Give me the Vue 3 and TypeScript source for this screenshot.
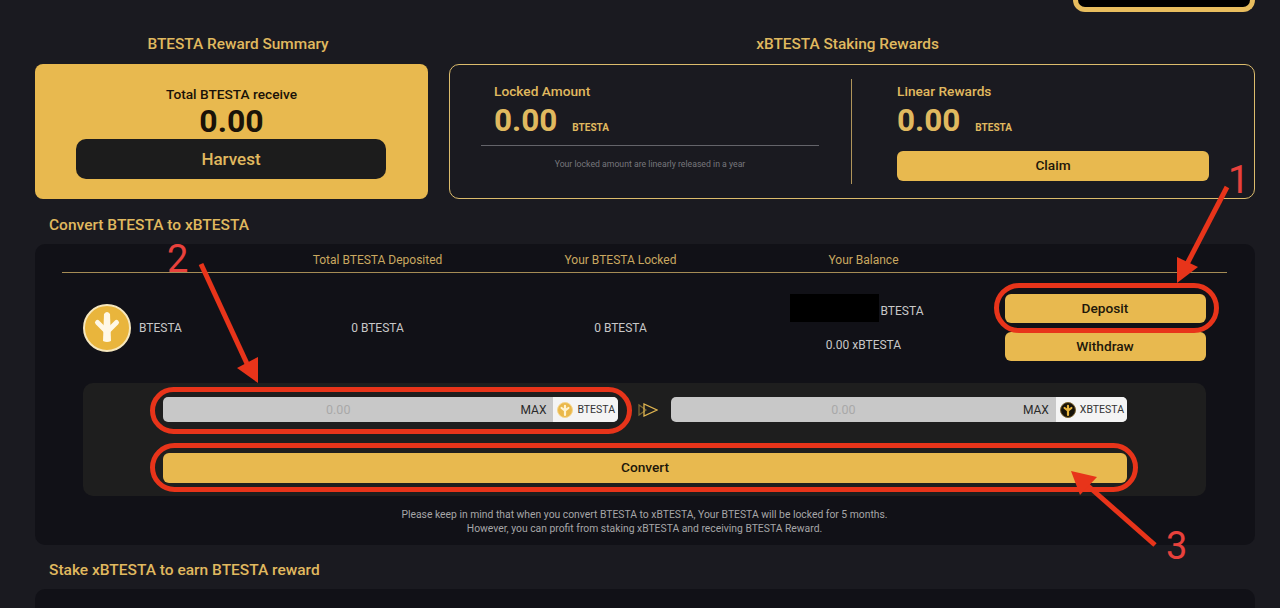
<script setup lang="ts">
interface Field {
  token: string
  logo: 'gold' | 'dark'
}

const fields: Field[] = [
  { token: 'BTESTA', logo: 'gold' },
  { token: 'XBTESTA', logo: 'dark' },
]

interface Pointer {
  label: string
  x: number
  y: number
  line: string
  head: string
}

const pointers: Pointer[] = [
  { label: '1', x: 1228, y: 193, line: 'M1227 187L1186 266', head: '1177,283 1177,257 1198,267' },
  { label: '2', x: 167, y: 272, line: 'M201 264L249 368', head: '258,383 237,368 258,357' },
  { label: '3', x: 1166, y: 559, line: 'M1155 545L1087 485', head: '1071,471 1097,477 1080,495' },
]
</script>

<template>
  <div class="page">
    <div class="top-bar">
      <div class="wallet"></div>
    </div>

    <div class="summary">
      <section>
        <h2 class="summary-title reward-title">BTESTA Reward Summary</h2>
        <div class="reward-card">
          <div class="reward-label">Total BTESTA receive</div>
          <div class="reward-value">0.00</div>
          <button class="harvest">Harvest</button>
        </div>
      </section>
      <section>
        <h2 class="summary-title staking-title">xBTESTA Staking Rewards</h2>
        <div class="staking-card">
          <div class="staking-col locked">
            <div class="staking-head">
              <div class="staking-label">Locked Amount</div>
              <div class="staking-amount">0.00<span>BTESTA</span></div>
            </div>
            <div class="staking-rule"></div>
            <p class="staking-note">Your locked amount are linearly released in a year</p>
          </div>
          <div class="staking-col linear">
            <div class="staking-label">Linear Rewards</div>
            <div class="staking-amount">0.00<span>BTESTA</span></div>
            <button class="gold-btn claim">Claim</button>
          </div>
        </div>
      </section>
    </div>

    <h2 class="section-title">Convert BTESTA to xBTESTA</h2>
    <div class="panel">
      <div class="table-head">
        <span></span>
        <span>Total BTESTA Deposited</span>
        <span>Your BTESTA Locked</span>
        <span>Your Balance</span>
        <span></span>
      </div>
      <div class="table-row">
        <div class="token-cell">
          <svg class="token-logo" viewBox="0 0 48 48">
            <circle cx="24" cy="24" r="23" fill="#e9b53c" stroke="#f6e7bd" stroke-width="2" />
            <path d="M24 28L14.5 18.5M24 28L33.5 18.5" fill="none" stroke="#fff8e6" stroke-width="5" stroke-linecap="round" />
            <path d="M21 10Q24 6 27 10L28 37Q24 39 20 37Z" fill="#fff8e6" />
          </svg>
          <span>BTESTA</span>
        </div>
        <div class="cell">0 BTESTA</div>
        <div class="cell">0 BTESTA</div>
        <div class="balance">
          <div class="balance-top"><i class="redacted"></i><span>BTESTA</span></div>
          <div>0.00 xBTESTA</div>
        </div>
        <div class="actions">
          <button class="gold-btn">Deposit</button>
          <button class="gold-btn">Withdraw</button>
        </div>
      </div>

      <div class="convert-box">
        <div class="convert-inputs">
          <template v-for="(field, i) in fields" :key="field.token">
            <div class="field">
              <input class="field-input" placeholder="0.00" />
              <span class="field-max">MAX</span>
              <span class="field-token">
                <svg class="mini-logo" viewBox="0 0 16 16">
                  <circle cx="8" cy="8" r="7.5" :fill="field.logo === 'gold' ? '#eab84a' : '#17130a'" :stroke="field.logo === 'gold' ? '#f4d48c' : '#7a6330'" stroke-width="1" />
                  <path d="M8 13V3.8M8 8.6L4.6 6M8 8.6L11.4 6" fill="none" :stroke="field.logo === 'gold' ? '#fff3d0' : '#e9b53c'" stroke-width="2.2" stroke-linecap="round" />
                </svg>
                {{ field.token }}
              </span>
            </div>
            <svg v-if="i === 0" class="swap-arrow" viewBox="0 0 20 14">
              <path d="M1 2V12L8 7Z" fill="none" stroke="#7d6a35" stroke-width="1.2" />
              <path d="M6 1V13L19 7Z" fill="none" stroke="#e0b550" stroke-width="1.3" />
            </svg>
          </template>
        </div>
        <button class="gold-btn convert">Convert</button>
      </div>

      <p class="footnote">
        Please keep in mind that when you convert BTESTA to xBTESTA, Your BTESTA will be locked for 5 months.<br />
        However, you can profit from staking xBTESTA and receiving BTESTA Reward.
      </p>
    </div>

    <h2 class="section-title stake">Stake xBTESTA to earn BTESTA reward</h2>
    <div class="panel stake-panel"></div>

    <!-- red markup drawn over the screenshot -->
    <svg class="markup" viewBox="0 0 1280 608">
      <g fill="none" stroke="#e8341a" stroke-width="5">
        <rect x="996.5" y="285.5" width="220" height="45" rx="22.5" />
        <rect x="152.5" y="389.5" width="477" height="42" rx="21" />
        <rect x="152.5" y="445.5" width="983" height="44" rx="22" />
      </g>
      <g v-for="p in pointers" :key="p.label">
        <path :d="p.line" stroke="#e8341a" stroke-width="5" fill="none" />
        <polygon :points="p.head" fill="#e8341a" />
        <text :x="p.x" :y="p.y" class="markup-num">{{ p.label }}</text>
      </g>
    </svg>
  </div>
</template>

<style>
body {
  background: #1a1a20;
}
</style>

<style scoped>
.page {
  position: relative;
  box-sizing: border-box;
  width: 1280px;
  height: 608px;
  padding: 0 25px 0 35px;
  overflow: hidden;
  background: #1a1a20;
  font-family: Roboto, "Liberation Sans", sans-serif;
  color: #e0b95f;
}

h2 {
  margin: 0;
  font-weight: 500;
}

button {
  border: none;
  font-family: inherit;
  cursor: pointer;
}

.top-bar {
  display: flex;
  justify-content: flex-end;
  height: 12px;
}

.wallet {
  box-sizing: border-box;
  width: 182px;
  height: 12px;
  background: #000;
  border: 5px solid #e8bd5e;
  border-top: none;
  border-radius: 0 0 14px 14px;
}

.summary {
  display: grid;
  grid-template-columns: 393px 806px;
  gap: 21px;
  margin-top: 22px;
}

.summary-title {
  height: 20px;
  margin-bottom: 10px;
  font-size: 15.4px;
  line-height: 20px;
  text-align: center;
}

.reward-title {
  padding-left: 13px;
}

.staking-title {
  padding-right: 9px;
}

.reward-card {
  box-sizing: border-box;
  display: flex;
  flex-direction: column;
  align-items: center;
  height: 135px;
  padding-top: 21px;
  background: #e8b94f;
  border-radius: 8px;
  color: #1a1208;
}

.reward-label {
  font-size: 13.7px;
  font-weight: 500;
  line-height: 18px;
}

.reward-value {
  font-size: 32px;
  font-weight: 700;
  line-height: 36px;
}

.harvest {
  width: 310px;
  height: 40px;
  margin-left: -1px;
  background: #1c1c1c;
  border-radius: 10px;
  color: #e0b95f;
  font-size: 17px;
  font-weight: 500;
}

.staking-card {
  box-sizing: border-box;
  display: grid;
  grid-template-columns: 402px 1fr;
  height: 135px;
  padding: 14px 0;
  border: 1px solid #dcbc6c;
  border-radius: 10px;
}

.staking-col {
  box-sizing: border-box;
  height: 105px;
}

.locked {
  padding: 3px 32px 0 31px;
  border-right: 1px solid #b0955a;
}

.staking-head {
  padding-left: 13px;
}

.linear {
  padding: 3px 45px 0 45px;
}

.staking-label {
  font-size: 13.7px;
  font-weight: 500;
  line-height: 18px;
}

.staking-amount {
  display: flex;
  align-items: baseline;
  height: 30px;
  font-size: 31.5px;
  font-weight: 700;
  line-height: 42px;
}

.staking-amount span {
  margin-left: 15px;
  font-size: 10px;
  font-weight: 700;
}

.staking-rule {
  height: 1px;
  margin-top: 15px;
  background: #64646a;
}

.staking-note {
  margin: 12px 0 0;
  color: #77777c;
  font-size: 8.7px;
  line-height: 12px;
  text-align: center;
}

.gold-btn {
  display: block;
  padding: 0 0 2px;
  background: #e8b94f;
  border-radius: 6px;
  color: #21170a;
  font-size: 13.7px;
  font-weight: 500;
}

.claim {
  width: 312px;
  height: 30px;
  margin-top: 21px;
}

.section-title {
  height: 20px;
  margin: 16px 0 9px 14px;
  font-size: 15.5px;
  line-height: 20px;
}

.panel {
  box-sizing: border-box;
  height: 301px;
  padding: 6px 28px 0 27px;
  background: #111117;
  border-radius: 10px;
}

.table-head {
  display: grid;
  grid-template-columns: 194px 243px 243px 243px 1fr;
  height: 22px;
  border-bottom: 1px solid #a58c55;
  font-size: 12px;
  line-height: 20px;
  text-align: center;
  color: #c9a860;
}

.table-row {
  display: grid;
  grid-template-columns: 194px 243px 243px 243px 1fr;
  align-items: center;
  height: 110px;
  color: #c8c8c8;
  font-size: 12px;
  text-align: center;
}

.token-cell {
  display: flex;
  align-items: center;
  gap: 8px;
  padding-left: 21px;
}

.token-logo {
  width: 48px;
  height: 48px;
}

.cell {
  margin-top: -1px;
}

.balance {
  display: flex;
  flex-direction: column;
  align-items: center;
  gap: 13px;
  margin-top: -7px;
  line-height: 20px;
}

.balance-top {
  display: flex;
  align-items: flex-end;
  gap: 2px;
  margin-right: 14px;
}

.redacted {
  display: block;
  width: 89px;
  height: 28px;
  background: #000;
}

.balance-top span {
  line-height: 22px;
}

.actions {
  display: flex;
  flex-direction: column;
  align-items: center;
  gap: 9px;
  margin-top: -1px;
  padding-right: 2px;
}

.actions .gold-btn {
  width: 201px;
  height: 29px;
}

.convert-box {
  box-sizing: border-box;
  height: 113px;
  margin: 0 21px;
  padding: 14px 79px 0 80px;
  background: #1e1e1e;
  border-radius: 10px;
}

.convert-inputs {
  display: grid;
  grid-template-columns: 455px 53px 1fr;
  align-items: center;
}

.field {
  display: flex;
  align-items: center;
  height: 25px;
  overflow: hidden;
  background: #c8c8c8;
  border-radius: 5px;
}

.field-input {
  flex: 1;
  min-width: 0;
  padding: 0;
  border: none;
  outline: none;
  background: transparent;
  font: 12.5px Roboto, "Liberation Sans", sans-serif;
  text-align: center;
}

.field-input::placeholder {
  color: #a8a8a8;
}

.field-max {
  padding: 0 7px;
  color: #2a2a2a;
  font-size: 12px;
}

.field-token {
  display: flex;
  align-items: center;
  gap: 4px;
  height: 100%;
  padding: 0 3px 0 4px;
  background: #f4f4f4;
  color: #333;
  font-size: 10.5px;
}

.mini-logo {
  width: 16px;
  height: 16px;
}

.swap-arrow {
  justify-self: center;
  width: 20px;
  height: 14px;
  margin-left: 6px;
}

.convert {
  width: 100%;
  height: 30px;
  margin-top: 31px;
}

.footnote {
  margin: 12px 0 0;
  color: #a6a6a8;
  font-size: 10.35px;
  line-height: 14px;
  text-align: center;
}

.stake {
  margin-top: 15px;
}

.markup {
  position: absolute;
  top: 0;
  left: 0;
  width: 1280px;
  height: 608px;
  pointer-events: none;
}

.markup-num {
  fill: #e8413c;
  font-family: Roboto, sans-serif;
  font-size: 38px;
}
</style>
